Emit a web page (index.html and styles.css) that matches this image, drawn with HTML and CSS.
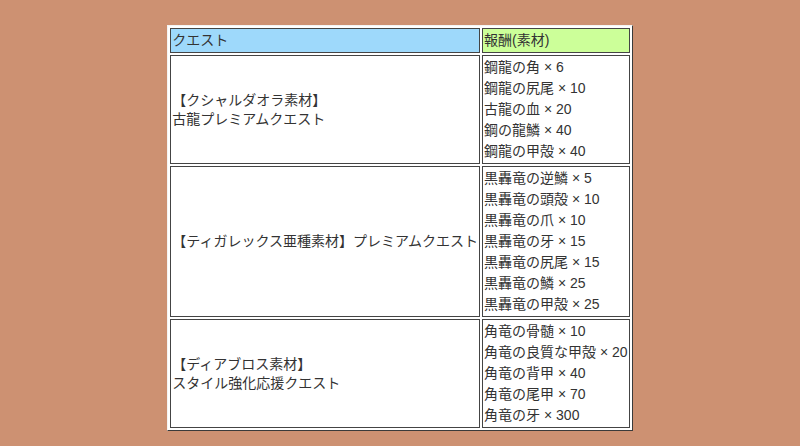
FILE: index.html
```html
<!DOCTYPE html>
<html lang="ja">
<head>
<meta charset="utf-8">
<link rel="stylesheet" href="styles.css">
</head>
<body>
<table class="quest-table">
  <tr>
    <th class="h-quest">クエスト</th>
    <th class="h-reward">報酬(素材)</th>
  </tr>
  <tr>
    <td class="quest">【クシャルダオラ素材】<br>古龍プレミアムクエスト</td>
    <td class="reward">鋼龍の角 × 6<br>鋼龍の尻尾 × 10<br>古龍の血 × 20<br>鋼の龍鱗 × 40<br>鋼龍の甲殻 × 40</td>
  </tr>
  <tr>
    <td class="quest">【ティガレックス亜種素材】プレミアムクエスト</td>
    <td class="reward">黒轟竜の逆鱗 × 5<br>黒轟竜の頭殻 × 10<br>黒轟竜の爪 × 10<br>黒轟竜の牙 × 15<br>黒轟竜の尻尾 × 15<br>黒轟竜の鱗 × 25<br>黒轟竜の甲殻 × 25</td>
  </tr>
  <tr>
    <td class="quest">【ディアブロス素材】<br>スタイル強化応援クエスト</td>
    <td class="reward">角竜の骨髄 × 10<br>角竜の良質な甲殻 × 20<br>角竜の背甲 × 40<br>角竜の尾甲 × 70<br>角竜の牙 × 300</td>
  </tr>
</table>
</body>
</html>
```

FILE: styles.css
```css
html, body {
  margin: 0;
  padding: 0;
}
body {
  background: #cd9172;
  padding-top: 25px;
  font-family: "Liberation Sans", "Noto Sans CJK JP", sans-serif;
  font-size: 14px;
  color: #333;
}
.quest-table {
  margin: 0 auto;
  background: #fff;
  border: 1px solid;
  border-color: #f4f4f4 #3a3a3a #3a3a3a #f4f4f4;
  border-spacing: 2px;
}
.quest-table th,
.quest-table td {
  border: 1px solid #444;
  padding: 1px;
  text-align: left;
  font-weight: normal;
  white-space: nowrap;
}
.quest-table th {
  line-height: 21px;
}
.h-quest {
  background: #9ed9fb;
}
.h-reward {
  background: #ccff99;
}
.quest {
  vertical-align: middle;
  line-height: 19px;
}
.reward {
  vertical-align: top;
  line-height: 21px;
}
```
